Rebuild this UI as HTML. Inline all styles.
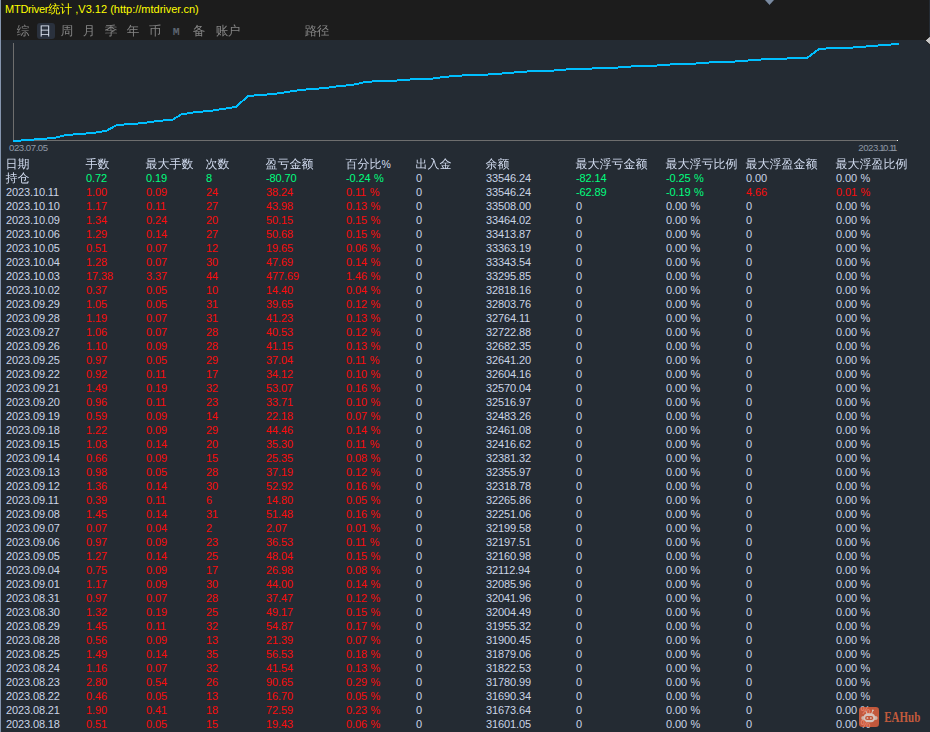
<!DOCTYPE html>
<html lang="zh-CN"><head><meta charset="utf-8"><title>MTDriver统计</title>
<style>
html,body{margin:0;padding:0;}
body{width:930px;height:732px;overflow:hidden;background:#242b33;position:relative;font-family:"Liberation Sans","WenQuanYi Zen Hei",sans-serif;font-size:11px;color:#cad4e6;}
#top{position:absolute;left:0;top:0;width:930px;height:40px;background:#1c1c1c;}
#edge{position:absolute;left:0;top:0;width:1px;height:732px;background:#8595ae;}
#title{position:absolute;left:5px;top:2px;line-height:14px;color:#ffff00;white-space:nowrap;}
#title i{font-style:normal;letter-spacing:-0.25px;}
#title b{font-weight:normal;font-size:12px;letter-spacing:0;}
#tabs span{position:absolute;top:23.4px;height:16px;line-height:16px;font-size:12.6px;color:#858585;white-space:nowrap;letter-spacing:-0.6px;margin-left:-0.3px;}
#tabs span.sel{color:#dde4f2;}
#tabs span.m{font-family:"Liberation Mono",monospace;font-size:11.5px;color:#5c6470;top:23.5px;font-weight:bold;}
#selbg{position:absolute;left:37px;top:23px;width:18px;height:16px;border-radius:3px;background:#2a313d;}
.r{position:absolute;left:0;width:930px;height:14px;line-height:14px;white-space:nowrap;letter-spacing:-0.12px;word-spacing:0.6px;}
.r span{position:absolute;top:0;}
.r.h span,.zh{font-size:12px;letter-spacing:0;color:#d2dcf0;margin-left:-0.5px;}
.r em{font-style:normal;font-size:10.5px;}
.g{color:#00ff7f;}
.d{color:#f90c0c;}
.ax u{text-decoration:none;letter-spacing:-1.7px;margin-left:-0.8px;}
.ax{position:absolute;font-size:9.6px;line-height:10px;color:#8f98a6;white-space:nowrap;letter-spacing:-0.45px;}
svg{position:absolute;left:0;top:0;}
</style></head><body>
<div id="top"></div>
<div id="title"><i>MTDriver</i><b>统计</b> ,V3.12 (http://mtdriver.cn)</div>
<div id="selbg"></div>
<div id="tabs"><span style="left:17px">综</span><span class="sel" style="left:39px">日</span><span style="left:61px">周</span><span style="left:83px">月</span><span style="left:105px">季</span><span style="left:127px">年</span><span style="left:149px">币</span><span style="left:193px">备</span><span style="left:216px">账户</span><span style="left:305px">路径</span><span class="m" style="left:173px">M</span></div>
<svg width="930" height="732" viewBox="0 0 930 732">
<polygon points="764,-0.500 775,-0.500 769.500,5.400" fill="#7a8aa0" stroke="#0d0d0d" stroke-width="0.800"/>
<rect x="929" y="0" width="1" height="40" fill="#242b33"/><polygon points="931,35.300 931,45.700 925.300,40.500" fill="#c8c8c8" stroke="#101010" stroke-width="0.800"/>
<rect x="13" y="43" width="1" height="98" fill="#6e6e6e"/>
<rect x="13" y="140" width="885" height="1" fill="#6e6e6e"/><rect x="897" y="140" width="1" height="1" fill="#ececec"/>
<path d="M13 140H21V142H13ZM21 139H34V141H21ZM34 138H47V140H34ZM47 137H56V139H47ZM56 136H60V138H56ZM60 135H64V137H60ZM64 134H73V136H64ZM73 133H86V135H73ZM86 132H96V134H86ZM96 131H102V133H96ZM102 130H106V132H102ZM106 129.86L117 123.86V126.14L106 132.14ZM117 124H124V126H117ZM124 123H138V125H124ZM138 122H147V124H138ZM147 121H154V123H147ZM154 120H163V122H154ZM163 119H172V121H163ZM172 118.83L182 112.83V115.17L172 121.17ZM182 113H187V115H182ZM187 112H193V114H187ZM193 111H203V113H193ZM203 110H213V112H203ZM213 109H219V111H213ZM219 108H226V110H219ZM226 107H232V109H226ZM232 106H236V108H232ZM236 105.64L248 94.64V97.36L236 108.36ZM248 95H254V97H248ZM254 94H267V96H254ZM267 93H277V95H267ZM277 92H284V94H277ZM284 91H290V93H284ZM290 90H297V92H290ZM297 89H306V91H297ZM306 88H319V90H306ZM319 87H329V89H319ZM329 86H336V88H329ZM336 85H346V87H336ZM346 84H354V86H346ZM354 83H359V85H354ZM359 82H363V84H359ZM363 81H372V83H363ZM372 80H397V82H372ZM397 79H410V81H397ZM410 78H433V80H410ZM433 77H440V79H433ZM440 76H449V78H440ZM449 75H462V77H449ZM462 74H488V76H462ZM488 73H502V75H488ZM502 72H514V74H502ZM514 71H527V73H514ZM527 70H554V72H527ZM554 69H566V71H554ZM566 68H592V70H566ZM592 67H618V69H592ZM618 66H631V68H618ZM631 65H657V67H631ZM657 64H670V66H657ZM670 63H696V65H670ZM696 62H709V64H696ZM709 61H735V63H709ZM735 60H748V62H735ZM748 59H761V61H748ZM761 58H787V60H761ZM787 57H807V59H787ZM807 56.75L819 47.75V50.25L807 59.25ZM819 48H826V50H819ZM826 47H853V49H826ZM853 46H866V48H853ZM866 45H878V47H866ZM878 44H891V46H878ZM891 43H899V45H891Z" fill="#00bfff" shape-rendering="crispEdges"/>
</svg>
<div class="ax" style="left:9px;top:143px">023.07.05</div>
<div class="ax" style="left:858.300px;top:143px">2023.<u>1</u>0.<u>1</u><u>1</u></div>
<div class="r h" style="top:157px"><span style="left:6px">日期</span><span style="left:86px">手数</span><span style="left:146px">最大手数</span><span style="left:206px">次数</span><span style="left:266px">盈亏金额</span><span style="left:346px">百分比<em>%</em></span><span style="left:416px">出入金</span><span style="left:486px">余额</span><span style="left:576px">最大浮亏金额</span><span style="left:666px">最大浮亏比例</span><span style="left:746px">最大浮盈金额</span><span style="left:836px">最大浮盈比例</span></div>
<div class="r " style="top:171px"><span class="zh" style="left:6px">持仓</span><span class="g" style="left:86px">0.72</span><span class="g" style="left:146px">0.19</span><span class="g" style="left:206px">8</span><span class="g" style="left:266px">-80.70</span><span class="g" style="left:346px">-0.24 %</span><span style="left:416px">0</span><span style="left:486px">33546.24</span><span class="g" style="left:576px">-82.14</span><span class="g" style="left:666px">-0.25 %</span><span style="left:746px">0.00</span><span style="left:836px">0.00 %</span></div>
<div class="r " style="top:185px"><span style="left:6px">2023.10.11</span><span class="d" style="left:86px">1.00</span><span class="d" style="left:146px">0.09</span><span class="d" style="left:206px">24</span><span class="d" style="left:266px">38.24</span><span class="d" style="left:346px">0.11 %</span><span style="left:416px">0</span><span style="left:486px">33546.24</span><span class="g" style="left:576px">-62.89</span><span class="g" style="left:666px">-0.19 %</span><span class="d" style="left:746px">4.66</span><span class="d" style="left:836px">0.01 %</span></div>
<div class="r " style="top:199px"><span style="left:6px">2023.10.10</span><span class="d" style="left:86px">1.17</span><span class="d" style="left:146px">0.11</span><span class="d" style="left:206px">27</span><span class="d" style="left:266px">43.98</span><span class="d" style="left:346px">0.13 %</span><span style="left:416px">0</span><span style="left:486px">33508.00</span><span style="left:576px">0</span><span style="left:666px">0.00 %</span><span style="left:746px">0</span><span style="left:836px">0.00 %</span></div>
<div class="r " style="top:213px"><span style="left:6px">2023.10.09</span><span class="d" style="left:86px">1.34</span><span class="d" style="left:146px">0.24</span><span class="d" style="left:206px">20</span><span class="d" style="left:266px">50.15</span><span class="d" style="left:346px">0.15 %</span><span style="left:416px">0</span><span style="left:486px">33464.02</span><span style="left:576px">0</span><span style="left:666px">0.00 %</span><span style="left:746px">0</span><span style="left:836px">0.00 %</span></div>
<div class="r " style="top:227px"><span style="left:6px">2023.10.06</span><span class="d" style="left:86px">1.29</span><span class="d" style="left:146px">0.14</span><span class="d" style="left:206px">27</span><span class="d" style="left:266px">50.68</span><span class="d" style="left:346px">0.15 %</span><span style="left:416px">0</span><span style="left:486px">33413.87</span><span style="left:576px">0</span><span style="left:666px">0.00 %</span><span style="left:746px">0</span><span style="left:836px">0.00 %</span></div>
<div class="r " style="top:241px"><span style="left:6px">2023.10.05</span><span class="d" style="left:86px">0.51</span><span class="d" style="left:146px">0.07</span><span class="d" style="left:206px">12</span><span class="d" style="left:266px">19.65</span><span class="d" style="left:346px">0.06 %</span><span style="left:416px">0</span><span style="left:486px">33363.19</span><span style="left:576px">0</span><span style="left:666px">0.00 %</span><span style="left:746px">0</span><span style="left:836px">0.00 %</span></div>
<div class="r " style="top:255px"><span style="left:6px">2023.10.04</span><span class="d" style="left:86px">1.28</span><span class="d" style="left:146px">0.07</span><span class="d" style="left:206px">30</span><span class="d" style="left:266px">47.69</span><span class="d" style="left:346px">0.14 %</span><span style="left:416px">0</span><span style="left:486px">33343.54</span><span style="left:576px">0</span><span style="left:666px">0.00 %</span><span style="left:746px">0</span><span style="left:836px">0.00 %</span></div>
<div class="r " style="top:269px"><span style="left:6px">2023.10.03</span><span class="d" style="left:86px">17.38</span><span class="d" style="left:146px">3.37</span><span class="d" style="left:206px">44</span><span class="d" style="left:266px">477.69</span><span class="d" style="left:346px">1.46 %</span><span style="left:416px">0</span><span style="left:486px">33295.85</span><span style="left:576px">0</span><span style="left:666px">0.00 %</span><span style="left:746px">0</span><span style="left:836px">0.00 %</span></div>
<div class="r " style="top:283px"><span style="left:6px">2023.10.02</span><span class="d" style="left:86px">0.37</span><span class="d" style="left:146px">0.05</span><span class="d" style="left:206px">10</span><span class="d" style="left:266px">14.40</span><span class="d" style="left:346px">0.04 %</span><span style="left:416px">0</span><span style="left:486px">32818.16</span><span style="left:576px">0</span><span style="left:666px">0.00 %</span><span style="left:746px">0</span><span style="left:836px">0.00 %</span></div>
<div class="r " style="top:297px"><span style="left:6px">2023.09.29</span><span class="d" style="left:86px">1.05</span><span class="d" style="left:146px">0.05</span><span class="d" style="left:206px">31</span><span class="d" style="left:266px">39.65</span><span class="d" style="left:346px">0.12 %</span><span style="left:416px">0</span><span style="left:486px">32803.76</span><span style="left:576px">0</span><span style="left:666px">0.00 %</span><span style="left:746px">0</span><span style="left:836px">0.00 %</span></div>
<div class="r " style="top:311px"><span style="left:6px">2023.09.28</span><span class="d" style="left:86px">1.19</span><span class="d" style="left:146px">0.07</span><span class="d" style="left:206px">31</span><span class="d" style="left:266px">41.23</span><span class="d" style="left:346px">0.13 %</span><span style="left:416px">0</span><span style="left:486px">32764.11</span><span style="left:576px">0</span><span style="left:666px">0.00 %</span><span style="left:746px">0</span><span style="left:836px">0.00 %</span></div>
<div class="r " style="top:325px"><span style="left:6px">2023.09.27</span><span class="d" style="left:86px">1.06</span><span class="d" style="left:146px">0.07</span><span class="d" style="left:206px">28</span><span class="d" style="left:266px">40.53</span><span class="d" style="left:346px">0.12 %</span><span style="left:416px">0</span><span style="left:486px">32722.88</span><span style="left:576px">0</span><span style="left:666px">0.00 %</span><span style="left:746px">0</span><span style="left:836px">0.00 %</span></div>
<div class="r " style="top:339px"><span style="left:6px">2023.09.26</span><span class="d" style="left:86px">1.10</span><span class="d" style="left:146px">0.09</span><span class="d" style="left:206px">28</span><span class="d" style="left:266px">41.15</span><span class="d" style="left:346px">0.13 %</span><span style="left:416px">0</span><span style="left:486px">32682.35</span><span style="left:576px">0</span><span style="left:666px">0.00 %</span><span style="left:746px">0</span><span style="left:836px">0.00 %</span></div>
<div class="r " style="top:353px"><span style="left:6px">2023.09.25</span><span class="d" style="left:86px">0.97</span><span class="d" style="left:146px">0.05</span><span class="d" style="left:206px">29</span><span class="d" style="left:266px">37.04</span><span class="d" style="left:346px">0.11 %</span><span style="left:416px">0</span><span style="left:486px">32641.20</span><span style="left:576px">0</span><span style="left:666px">0.00 %</span><span style="left:746px">0</span><span style="left:836px">0.00 %</span></div>
<div class="r " style="top:367px"><span style="left:6px">2023.09.22</span><span class="d" style="left:86px">0.92</span><span class="d" style="left:146px">0.11</span><span class="d" style="left:206px">17</span><span class="d" style="left:266px">34.12</span><span class="d" style="left:346px">0.10 %</span><span style="left:416px">0</span><span style="left:486px">32604.16</span><span style="left:576px">0</span><span style="left:666px">0.00 %</span><span style="left:746px">0</span><span style="left:836px">0.00 %</span></div>
<div class="r " style="top:381px"><span style="left:6px">2023.09.21</span><span class="d" style="left:86px">1.49</span><span class="d" style="left:146px">0.19</span><span class="d" style="left:206px">32</span><span class="d" style="left:266px">53.07</span><span class="d" style="left:346px">0.16 %</span><span style="left:416px">0</span><span style="left:486px">32570.04</span><span style="left:576px">0</span><span style="left:666px">0.00 %</span><span style="left:746px">0</span><span style="left:836px">0.00 %</span></div>
<div class="r " style="top:395px"><span style="left:6px">2023.09.20</span><span class="d" style="left:86px">0.96</span><span class="d" style="left:146px">0.11</span><span class="d" style="left:206px">23</span><span class="d" style="left:266px">33.71</span><span class="d" style="left:346px">0.10 %</span><span style="left:416px">0</span><span style="left:486px">32516.97</span><span style="left:576px">0</span><span style="left:666px">0.00 %</span><span style="left:746px">0</span><span style="left:836px">0.00 %</span></div>
<div class="r " style="top:409px"><span style="left:6px">2023.09.19</span><span class="d" style="left:86px">0.59</span><span class="d" style="left:146px">0.09</span><span class="d" style="left:206px">14</span><span class="d" style="left:266px">22.18</span><span class="d" style="left:346px">0.07 %</span><span style="left:416px">0</span><span style="left:486px">32483.26</span><span style="left:576px">0</span><span style="left:666px">0.00 %</span><span style="left:746px">0</span><span style="left:836px">0.00 %</span></div>
<div class="r " style="top:423px"><span style="left:6px">2023.09.18</span><span class="d" style="left:86px">1.22</span><span class="d" style="left:146px">0.09</span><span class="d" style="left:206px">29</span><span class="d" style="left:266px">44.46</span><span class="d" style="left:346px">0.14 %</span><span style="left:416px">0</span><span style="left:486px">32461.08</span><span style="left:576px">0</span><span style="left:666px">0.00 %</span><span style="left:746px">0</span><span style="left:836px">0.00 %</span></div>
<div class="r " style="top:437px"><span style="left:6px">2023.09.15</span><span class="d" style="left:86px">1.03</span><span class="d" style="left:146px">0.14</span><span class="d" style="left:206px">20</span><span class="d" style="left:266px">35.30</span><span class="d" style="left:346px">0.11 %</span><span style="left:416px">0</span><span style="left:486px">32416.62</span><span style="left:576px">0</span><span style="left:666px">0.00 %</span><span style="left:746px">0</span><span style="left:836px">0.00 %</span></div>
<div class="r " style="top:451px"><span style="left:6px">2023.09.14</span><span class="d" style="left:86px">0.66</span><span class="d" style="left:146px">0.09</span><span class="d" style="left:206px">15</span><span class="d" style="left:266px">25.35</span><span class="d" style="left:346px">0.08 %</span><span style="left:416px">0</span><span style="left:486px">32381.32</span><span style="left:576px">0</span><span style="left:666px">0.00 %</span><span style="left:746px">0</span><span style="left:836px">0.00 %</span></div>
<div class="r " style="top:465px"><span style="left:6px">2023.09.13</span><span class="d" style="left:86px">0.98</span><span class="d" style="left:146px">0.05</span><span class="d" style="left:206px">28</span><span class="d" style="left:266px">37.19</span><span class="d" style="left:346px">0.12 %</span><span style="left:416px">0</span><span style="left:486px">32355.97</span><span style="left:576px">0</span><span style="left:666px">0.00 %</span><span style="left:746px">0</span><span style="left:836px">0.00 %</span></div>
<div class="r " style="top:479px"><span style="left:6px">2023.09.12</span><span class="d" style="left:86px">1.36</span><span class="d" style="left:146px">0.14</span><span class="d" style="left:206px">30</span><span class="d" style="left:266px">52.92</span><span class="d" style="left:346px">0.16 %</span><span style="left:416px">0</span><span style="left:486px">32318.78</span><span style="left:576px">0</span><span style="left:666px">0.00 %</span><span style="left:746px">0</span><span style="left:836px">0.00 %</span></div>
<div class="r " style="top:493px"><span style="left:6px">2023.09.11</span><span class="d" style="left:86px">0.39</span><span class="d" style="left:146px">0.11</span><span class="d" style="left:206px">6</span><span class="d" style="left:266px">14.80</span><span class="d" style="left:346px">0.05 %</span><span style="left:416px">0</span><span style="left:486px">32265.86</span><span style="left:576px">0</span><span style="left:666px">0.00 %</span><span style="left:746px">0</span><span style="left:836px">0.00 %</span></div>
<div class="r " style="top:507px"><span style="left:6px">2023.09.08</span><span class="d" style="left:86px">1.45</span><span class="d" style="left:146px">0.14</span><span class="d" style="left:206px">31</span><span class="d" style="left:266px">51.48</span><span class="d" style="left:346px">0.16 %</span><span style="left:416px">0</span><span style="left:486px">32251.06</span><span style="left:576px">0</span><span style="left:666px">0.00 %</span><span style="left:746px">0</span><span style="left:836px">0.00 %</span></div>
<div class="r " style="top:521px"><span style="left:6px">2023.09.07</span><span class="d" style="left:86px">0.07</span><span class="d" style="left:146px">0.04</span><span class="d" style="left:206px">2</span><span class="d" style="left:266px">2.07</span><span class="d" style="left:346px">0.01 %</span><span style="left:416px">0</span><span style="left:486px">32199.58</span><span style="left:576px">0</span><span style="left:666px">0.00 %</span><span style="left:746px">0</span><span style="left:836px">0.00 %</span></div>
<div class="r " style="top:535px"><span style="left:6px">2023.09.06</span><span class="d" style="left:86px">0.97</span><span class="d" style="left:146px">0.09</span><span class="d" style="left:206px">23</span><span class="d" style="left:266px">36.53</span><span class="d" style="left:346px">0.11 %</span><span style="left:416px">0</span><span style="left:486px">32197.51</span><span style="left:576px">0</span><span style="left:666px">0.00 %</span><span style="left:746px">0</span><span style="left:836px">0.00 %</span></div>
<div class="r " style="top:549px"><span style="left:6px">2023.09.05</span><span class="d" style="left:86px">1.27</span><span class="d" style="left:146px">0.14</span><span class="d" style="left:206px">25</span><span class="d" style="left:266px">48.04</span><span class="d" style="left:346px">0.15 %</span><span style="left:416px">0</span><span style="left:486px">32160.98</span><span style="left:576px">0</span><span style="left:666px">0.00 %</span><span style="left:746px">0</span><span style="left:836px">0.00 %</span></div>
<div class="r " style="top:563px"><span style="left:6px">2023.09.04</span><span class="d" style="left:86px">0.75</span><span class="d" style="left:146px">0.09</span><span class="d" style="left:206px">17</span><span class="d" style="left:266px">26.98</span><span class="d" style="left:346px">0.08 %</span><span style="left:416px">0</span><span style="left:486px">32112.94</span><span style="left:576px">0</span><span style="left:666px">0.00 %</span><span style="left:746px">0</span><span style="left:836px">0.00 %</span></div>
<div class="r " style="top:577px"><span style="left:6px">2023.09.01</span><span class="d" style="left:86px">1.17</span><span class="d" style="left:146px">0.09</span><span class="d" style="left:206px">30</span><span class="d" style="left:266px">44.00</span><span class="d" style="left:346px">0.14 %</span><span style="left:416px">0</span><span style="left:486px">32085.96</span><span style="left:576px">0</span><span style="left:666px">0.00 %</span><span style="left:746px">0</span><span style="left:836px">0.00 %</span></div>
<div class="r " style="top:591px"><span style="left:6px">2023.08.31</span><span class="d" style="left:86px">0.97</span><span class="d" style="left:146px">0.07</span><span class="d" style="left:206px">28</span><span class="d" style="left:266px">37.47</span><span class="d" style="left:346px">0.12 %</span><span style="left:416px">0</span><span style="left:486px">32041.96</span><span style="left:576px">0</span><span style="left:666px">0.00 %</span><span style="left:746px">0</span><span style="left:836px">0.00 %</span></div>
<div class="r " style="top:605px"><span style="left:6px">2023.08.30</span><span class="d" style="left:86px">1.32</span><span class="d" style="left:146px">0.19</span><span class="d" style="left:206px">25</span><span class="d" style="left:266px">49.17</span><span class="d" style="left:346px">0.15 %</span><span style="left:416px">0</span><span style="left:486px">32004.49</span><span style="left:576px">0</span><span style="left:666px">0.00 %</span><span style="left:746px">0</span><span style="left:836px">0.00 %</span></div>
<div class="r " style="top:619px"><span style="left:6px">2023.08.29</span><span class="d" style="left:86px">1.45</span><span class="d" style="left:146px">0.11</span><span class="d" style="left:206px">32</span><span class="d" style="left:266px">54.87</span><span class="d" style="left:346px">0.17 %</span><span style="left:416px">0</span><span style="left:486px">31955.32</span><span style="left:576px">0</span><span style="left:666px">0.00 %</span><span style="left:746px">0</span><span style="left:836px">0.00 %</span></div>
<div class="r " style="top:633px"><span style="left:6px">2023.08.28</span><span class="d" style="left:86px">0.56</span><span class="d" style="left:146px">0.09</span><span class="d" style="left:206px">13</span><span class="d" style="left:266px">21.39</span><span class="d" style="left:346px">0.07 %</span><span style="left:416px">0</span><span style="left:486px">31900.45</span><span style="left:576px">0</span><span style="left:666px">0.00 %</span><span style="left:746px">0</span><span style="left:836px">0.00 %</span></div>
<div class="r " style="top:647px"><span style="left:6px">2023.08.25</span><span class="d" style="left:86px">1.49</span><span class="d" style="left:146px">0.14</span><span class="d" style="left:206px">35</span><span class="d" style="left:266px">56.53</span><span class="d" style="left:346px">0.18 %</span><span style="left:416px">0</span><span style="left:486px">31879.06</span><span style="left:576px">0</span><span style="left:666px">0.00 %</span><span style="left:746px">0</span><span style="left:836px">0.00 %</span></div>
<div class="r " style="top:661px"><span style="left:6px">2023.08.24</span><span class="d" style="left:86px">1.16</span><span class="d" style="left:146px">0.07</span><span class="d" style="left:206px">32</span><span class="d" style="left:266px">41.54</span><span class="d" style="left:346px">0.13 %</span><span style="left:416px">0</span><span style="left:486px">31822.53</span><span style="left:576px">0</span><span style="left:666px">0.00 %</span><span style="left:746px">0</span><span style="left:836px">0.00 %</span></div>
<div class="r " style="top:675px"><span style="left:6px">2023.08.23</span><span class="d" style="left:86px">2.80</span><span class="d" style="left:146px">0.54</span><span class="d" style="left:206px">26</span><span class="d" style="left:266px">90.65</span><span class="d" style="left:346px">0.29 %</span><span style="left:416px">0</span><span style="left:486px">31780.99</span><span style="left:576px">0</span><span style="left:666px">0.00 %</span><span style="left:746px">0</span><span style="left:836px">0.00 %</span></div>
<div class="r " style="top:689px"><span style="left:6px">2023.08.22</span><span class="d" style="left:86px">0.46</span><span class="d" style="left:146px">0.05</span><span class="d" style="left:206px">13</span><span class="d" style="left:266px">16.70</span><span class="d" style="left:346px">0.05 %</span><span style="left:416px">0</span><span style="left:486px">31690.34</span><span style="left:576px">0</span><span style="left:666px">0.00 %</span><span style="left:746px">0</span><span style="left:836px">0.00 %</span></div>
<div class="r " style="top:703px"><span style="left:6px">2023.08.21</span><span class="d" style="left:86px">1.90</span><span class="d" style="left:146px">0.41</span><span class="d" style="left:206px">18</span><span class="d" style="left:266px">72.59</span><span class="d" style="left:346px">0.23 %</span><span style="left:416px">0</span><span style="left:486px">31673.64</span><span style="left:576px">0</span><span style="left:666px">0.00 %</span><span style="left:746px">0</span><span style="left:836px">0.00 %</span></div>
<div class="r " style="top:717px"><span style="left:6px">2023.08.18</span><span class="d" style="left:86px">0.51</span><span class="d" style="left:146px">0.05</span><span class="d" style="left:206px">15</span><span class="d" style="left:266px">19.43</span><span class="d" style="left:346px">0.06 %</span><span style="left:416px">0</span><span style="left:486px">31601.05</span><span style="left:576px">0</span><span style="left:666px">0.00 %</span><span style="left:746px">0</span><span style="left:836px">0.00 %</span></div>
<svg id="wmk" width="80" height="30" viewBox="855 702 80 30" style="left:855px;top:702px">
<rect x="859" y="707" width="20" height="20" rx="3.200" fill="#ff6a40" opacity="0.72"/>
<path d="M866.800 713.600 L865.900 711.300 M871.600 713.600 L872.800 710.600" stroke="#d8c4bc" stroke-width="0.900" fill="none" stroke-linecap="round"/>
<circle cx="872.900" cy="710.300" r="0.900" fill="#d8c4bc"/>
<circle cx="863.200" cy="718" r="2" fill="#cfb3a8"/><circle cx="875.600" cy="718" r="2" fill="#cfb3a8"/>
<rect x="863.600" y="713.300" width="11.600" height="8.900" rx="4.200" fill="#d6c3bc"/>
<rect x="865.200" y="716" width="8" height="4" rx="1.800" fill="#c25638"/>
<rect x="866.600" y="717.300" width="1.700" height="1.400" rx="0.500" fill="#dcc8c0"/><rect x="870" y="717.300" width="1.700" height="1.400" rx="0.500" fill="#dcc8c0"/>
<text x="884.300" y="722" textLength="36" lengthAdjust="spacingAndGlyphs" font-family="Liberation Serif, serif" font-weight="bold" font-size="15" fill="#c25a3c">EAHub</text>
</svg>
<div id="edge"></div>
</body></html>
